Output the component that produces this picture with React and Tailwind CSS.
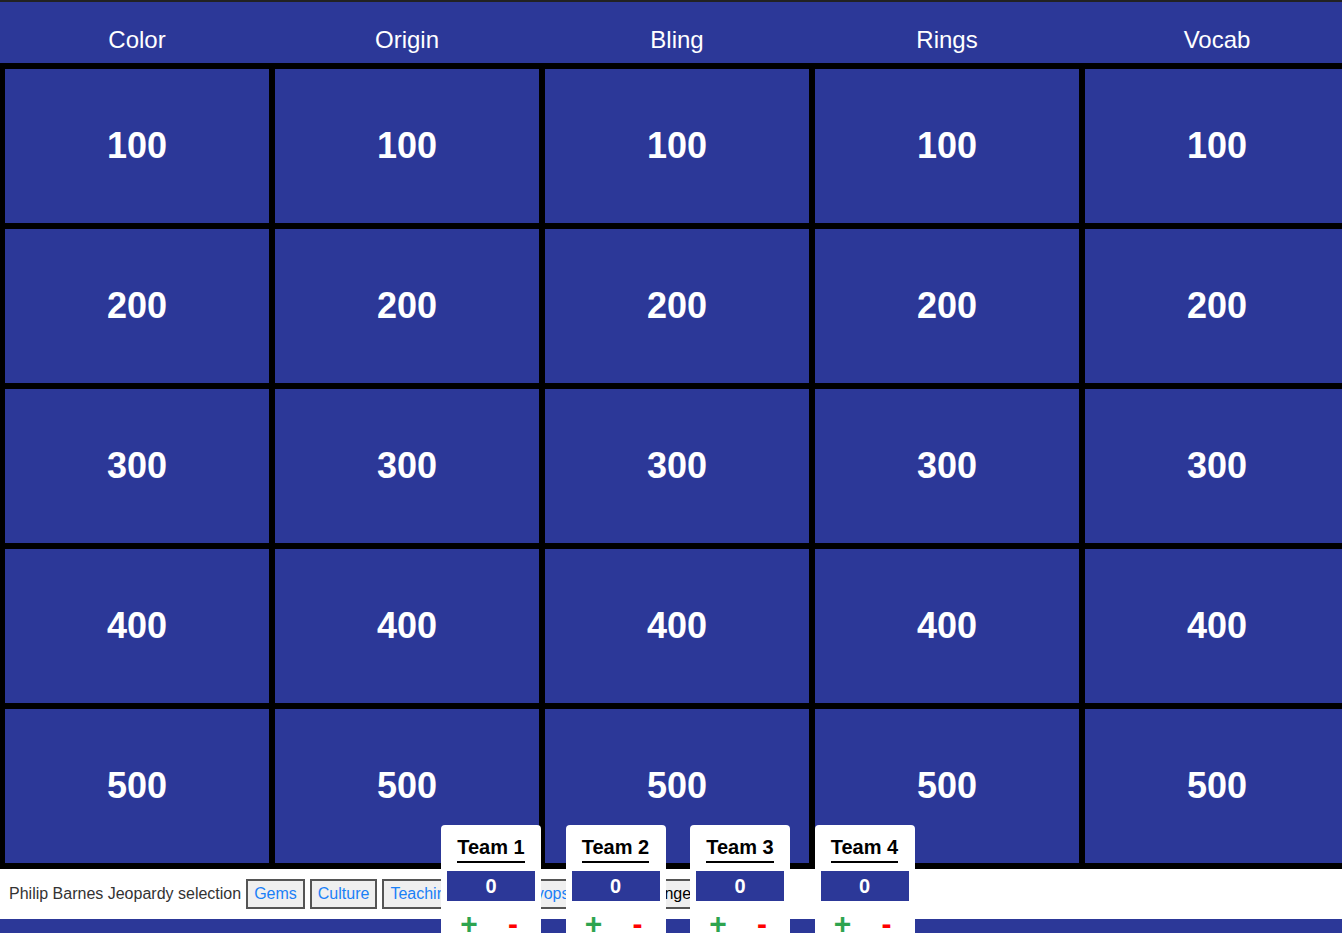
import React from "react";

const categories = ["Color", "Origin", "Bling", "Rings", "Vocab"];
const values = [100, 200, 300, 400, 500];
const teams = ["Team 1", "Team 2", "Team 3", "Team 4"];

const App = () => {
  return (
    <div
      className="relative h-[933px] w-full overflow-hidden bg-[#2c3898]"
      style={{ fontFamily: '"Liberation Sans", Arial, sans-serif' }}
    >
      <div className="h-[2px] bg-[#222]" />

      {/* category header */}
      <div className="grid h-[61px] grid-cols-[repeat(5,264px)] gap-x-[6px] bg-[#2c3898] pl-[5px] pt-[24px]">
        {categories.map((c) => (
          <div key={c} className="text-center text-[24px] leading-[27px] text-white">
            {c}
          </div>
        ))}
      </div>

      {/* board */}
      <div className="grid w-max min-w-full grid-cols-[repeat(5,264px)] gap-[6px] bg-black px-[5px] py-[6px]">
        {values.map((v) =>
          categories.map((c) => (
            <div
              key={c + v}
              className="flex h-[154px] items-center justify-center bg-[#2c3898] text-[36px] font-bold text-white"
            >
              {v}
            </div>
          ))
        )}
      </div>

      {/* footer */}
      <div className="flex h-[50px] items-center gap-[5px] bg-white pl-[9px] text-[16px] text-[#333]">
        <span>Philip Barnes Jeopardy selection</span>
        <button className="h-[30px] border-2 border-[#555] bg-[#efefef] px-[6px] text-[#1a80f7]">Gems</button>
        <button className="h-[30px] border-2 border-[#555] bg-[#efefef] px-[6px] text-[#1a80f7]">Culture</button>
        <button className="h-[30px] border-2 border-[#555] bg-[#efefef] px-[6px] text-[#1a80f7]">Teaching Tips</button>
        <button className="h-[30px] border-2 border-[#555] bg-[#efefef] pl-[12px] pr-[7px] text-[#1a80f7]">Devops</button>
        <button className="h-[30px] border-2 border-[#555] bg-[#efefef] px-[6px] text-black">Big Challenge</button>
      </div>
      <div className="h-[20px] bg-[#2c3898]" />

      {/* score cards */}
      <div className="absolute left-[441px] top-[825px] flex gap-[24.5px]">
        {teams.map((t) => (
          <div key={t} className="w-[100px] rounded-t-[4px] bg-white px-[6px] pb-[10px] pt-[9px]">
            <div className="text-center">
              <span className="inline-block border-b-2 border-black text-[20px] font-bold leading-[27px] text-black">
                {t}
              </span>
            </div>
            <div className="mt-[8px] flex h-[30px] items-center justify-center bg-[#2c3898] text-[20px] font-bold text-white">
              0
            </div>
            <div className="mt-[6px] flex text-[30px] font-bold leading-[34px]">
              <button className="flex-1 text-[#2ea44f]">+</button>
              <button className="flex-1 text-[#ff0000]">-</button>
            </div>
          </div>
        ))}
      </div>
    </div>
  );
};

export default App;
